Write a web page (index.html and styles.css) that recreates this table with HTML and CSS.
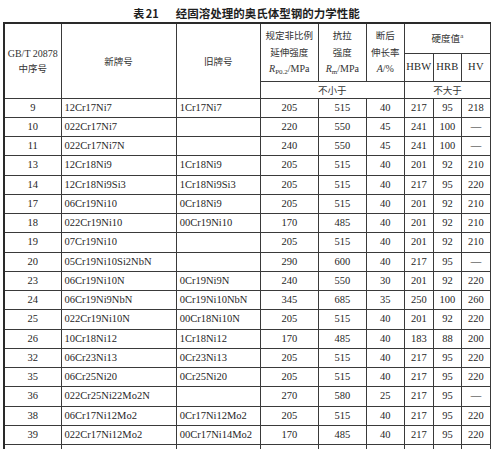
FILE: index.html
```html
<!DOCTYPE html>
<html lang="zh">
<head>
<meta charset="utf-8">
<link rel="stylesheet" href="styles.css">
</head>
<body>
<div class="page">
  <div class="title"><span class="tno">表 21</span><span class="tname">经固溶处理的奥氏体型钢的力学性能</span></div>
  <table class="grid">
    <colgroup>
      <col class="c1"><col class="c2"><col class="c3"><col class="c4"><col class="c5"><col class="c6"><col class="c7"><col class="c8"><col class="c9">
    </colgroup>
    <thead>
      <tr class="h1">
        <th rowspan="3" class="cn"><span class="lat">GB/T 20878</span><br>中序号</th>
        <th rowspan="3" class="cn">新牌号</th>
        <th rowspan="3" class="cn">旧牌号</th>
        <th rowspan="2" class="cn tall">规定非比例<br>延伸强度<br><span class="lat"><i>R</i><sub>P0.2</sub>/MPa</span></th>
        <th rowspan="2" class="cn tall">抗拉<br>强度<br><span class="lat"><i>R</i><sub>m</sub>/MPa</span></th>
        <th rowspan="2" class="cn tall">断后<br>伸长率<br><span class="lat"><i>A</i>/%</span></th>
        <th colspan="3" class="cn">硬度值<sup class="lat">a</sup></th>
      </tr>
      <tr class="h2">
        <th class="lat hv">HBW</th>
        <th class="lat hv">HRB</th>
        <th class="lat hv">HV</th>
      </tr>
      <tr class="h3">
        <th colspan="3" class="cn">不小于</th>
        <th colspan="3" class="cn">不大于</th>
      </tr>
    </thead>
    <tbody>
      <tr><td>9</td><td class="l">12Cr17Ni7</td><td class="l">1Cr17Ni7</td><td>205</td><td>515</td><td>40</td><td>217</td><td>95</td><td>218</td></tr>
      <tr><td>10</td><td class="l">022Cr17Ni7</td><td class="l"></td><td>220</td><td>550</td><td>45</td><td>241</td><td>100</td><td>—</td></tr>
      <tr><td>11</td><td class="l">022Cr17Ni7N</td><td class="l"></td><td>240</td><td>550</td><td>45</td><td>241</td><td>100</td><td>—</td></tr>
      <tr><td>13</td><td class="l">12Cr18Ni9</td><td class="l">1Cr18Ni9</td><td>205</td><td>515</td><td>40</td><td>201</td><td>92</td><td>210</td></tr>
      <tr><td>14</td><td class="l">12Cr18Ni9Si3</td><td class="l">1Cr18Ni9Si3</td><td>205</td><td>515</td><td>40</td><td>217</td><td>95</td><td>220</td></tr>
      <tr><td>17</td><td class="l">06Cr19Ni10</td><td class="l">0Cr18Ni9</td><td>205</td><td>515</td><td>40</td><td>201</td><td>92</td><td>210</td></tr>
      <tr><td>18</td><td class="l">022Cr19Ni10</td><td class="l">00Cr19Ni10</td><td>170</td><td>485</td><td>40</td><td>201</td><td>92</td><td>210</td></tr>
      <tr><td>19</td><td class="l">07Cr19Ni10</td><td class="l"></td><td>205</td><td>515</td><td>40</td><td>201</td><td>92</td><td>210</td></tr>
      <tr><td>20</td><td class="l">05Cr19Ni10Si2NbN</td><td class="l"></td><td>290</td><td>600</td><td>40</td><td>217</td><td>95</td><td>—</td></tr>
      <tr><td>23</td><td class="l">06Cr19Ni10N</td><td class="l">0Cr19Ni9N</td><td>240</td><td>550</td><td>30</td><td>201</td><td>92</td><td>220</td></tr>
      <tr><td>24</td><td class="l">06Cr19Ni9NbN</td><td class="l">0Cr19Ni10NbN</td><td>345</td><td>685</td><td>35</td><td>250</td><td>100</td><td>260</td></tr>
      <tr><td>25</td><td class="l">022Cr19Ni10N</td><td class="l">00Cr18Ni10N</td><td>205</td><td>515</td><td>40</td><td>201</td><td>92</td><td>220</td></tr>
      <tr><td>26</td><td class="l">10Cr18Ni12</td><td class="l">1Cr18Ni12</td><td>170</td><td>485</td><td>40</td><td>183</td><td>88</td><td>200</td></tr>
      <tr><td>32</td><td class="l">06Cr23Ni13</td><td class="l">0Cr23Ni13</td><td>205</td><td>515</td><td>40</td><td>217</td><td>95</td><td>220</td></tr>
      <tr><td>35</td><td class="l">06Cr25Ni20</td><td class="l">0Cr25Ni20</td><td>205</td><td>515</td><td>40</td><td>217</td><td>95</td><td>220</td></tr>
      <tr><td>36</td><td class="l">022Cr25Ni22Mo2N</td><td class="l"></td><td>270</td><td>580</td><td>25</td><td>217</td><td>95</td><td>—</td></tr>
      <tr><td>38</td><td class="l">06Cr17Ni12Mo2</td><td class="l">0Cr17Ni12Mo2</td><td>205</td><td>515</td><td>40</td><td>217</td><td>95</td><td>220</td></tr>
      <tr><td>39</td><td class="l">022Cr17Ni12Mo2</td><td class="l">00Cr17Ni14Mo2</td><td>170</td><td>485</td><td>40</td><td>217</td><td>95</td><td>220</td></tr>
      <tr><td>41</td><td class="l">06Cr17Ni12Mo2Ti</td><td class="l">0Cr18Ni12Mo3Ti</td><td>205</td><td>515</td><td>40</td><td>217</td><td>95</td><td>220</td></tr>
    </tbody>
  </table>
</div>
</body>
</html>
```

FILE: styles.css
```css
html, body {
  margin: 0;
  padding: 0;
  background: #ffffff;
}
body {
  width: 500px;
  height: 449px;
  overflow: hidden;
  color: #262626;
  font-family: "Liberation Serif", "Noto Sans CJK SC", serif;
}
.page {
  padding: 5px 0 0 3px;
}
.title {
  display: flex;
  justify-content: center;
  align-items: center;
  height: 16px;
  padding-right: 10px;
  font-family: "Noto Sans CJK SC", sans-serif;
  font-weight: 700;
  font-size: 11.5px;
  color: #1e1e1e;
  margin-bottom: 1px;
}
.tno {
  margin-right: 17px;
  font-size: 11px;
  word-spacing: -1px;
}
.grid {
  border-collapse: collapse;
  table-layout: fixed;
  width: 488px;
  border-top: 2px solid #2a2a2a;
  border-left: 2px solid #2a2a2a;
}
.c1 { width: 57px; }
.c2 { width: 115px; }
.c3 { width: 84px; }
.c4 { width: 58px; }
.c5 { width: 48px; }
.c6 { width: 38px; }
.c7 { width: 29px; }
.c8 { width: 28px; }
.c9 { width: 29px; }
.grid th,
.grid td {
  border: 1px solid #3a3a3a;
  padding: 0;
  text-align: center;
  vertical-align: middle;
  font-weight: 400;
  overflow: hidden;
  white-space: nowrap;
}
.grid th {
  font-size: 9.5px;
  line-height: 14px;
}
.grid th.tall {
  line-height: 16.5px;
}
.grid th.cn {
  font-family: "Noto Sans CJK SC", sans-serif;
  color: #333;
}
.lat {
  font-family: "Liberation Serif", serif;
  font-size: 10px;
}
.lat sub {
  font-size: 7px;
  vertical-align: -2px;
  line-height: 0;
}
.lat i {
  font-style: italic;
}
sup.lat {
  font-size: 7px;
  vertical-align: 4px;
  line-height: 0;
}
.grid th.hv {
  font-size: 10.5px;
  letter-spacing: 0.3px;
}
.h1 { height: 30px; }
.h2 { height: 28px; }
.h3 { height: 17px; }
.grid td {
  font-size: 10.5px;
  height: 18.25px;
  line-height: 12px;
}
.grid td.l {
  text-align: left;
  padding-left: 3px;
}
.grid tr > *:nth-child(6) {
  border-right-width: 1.5px;
}
.grid .h1 th:nth-child(6) {
  border-right-width: 1.5px;
}
```
